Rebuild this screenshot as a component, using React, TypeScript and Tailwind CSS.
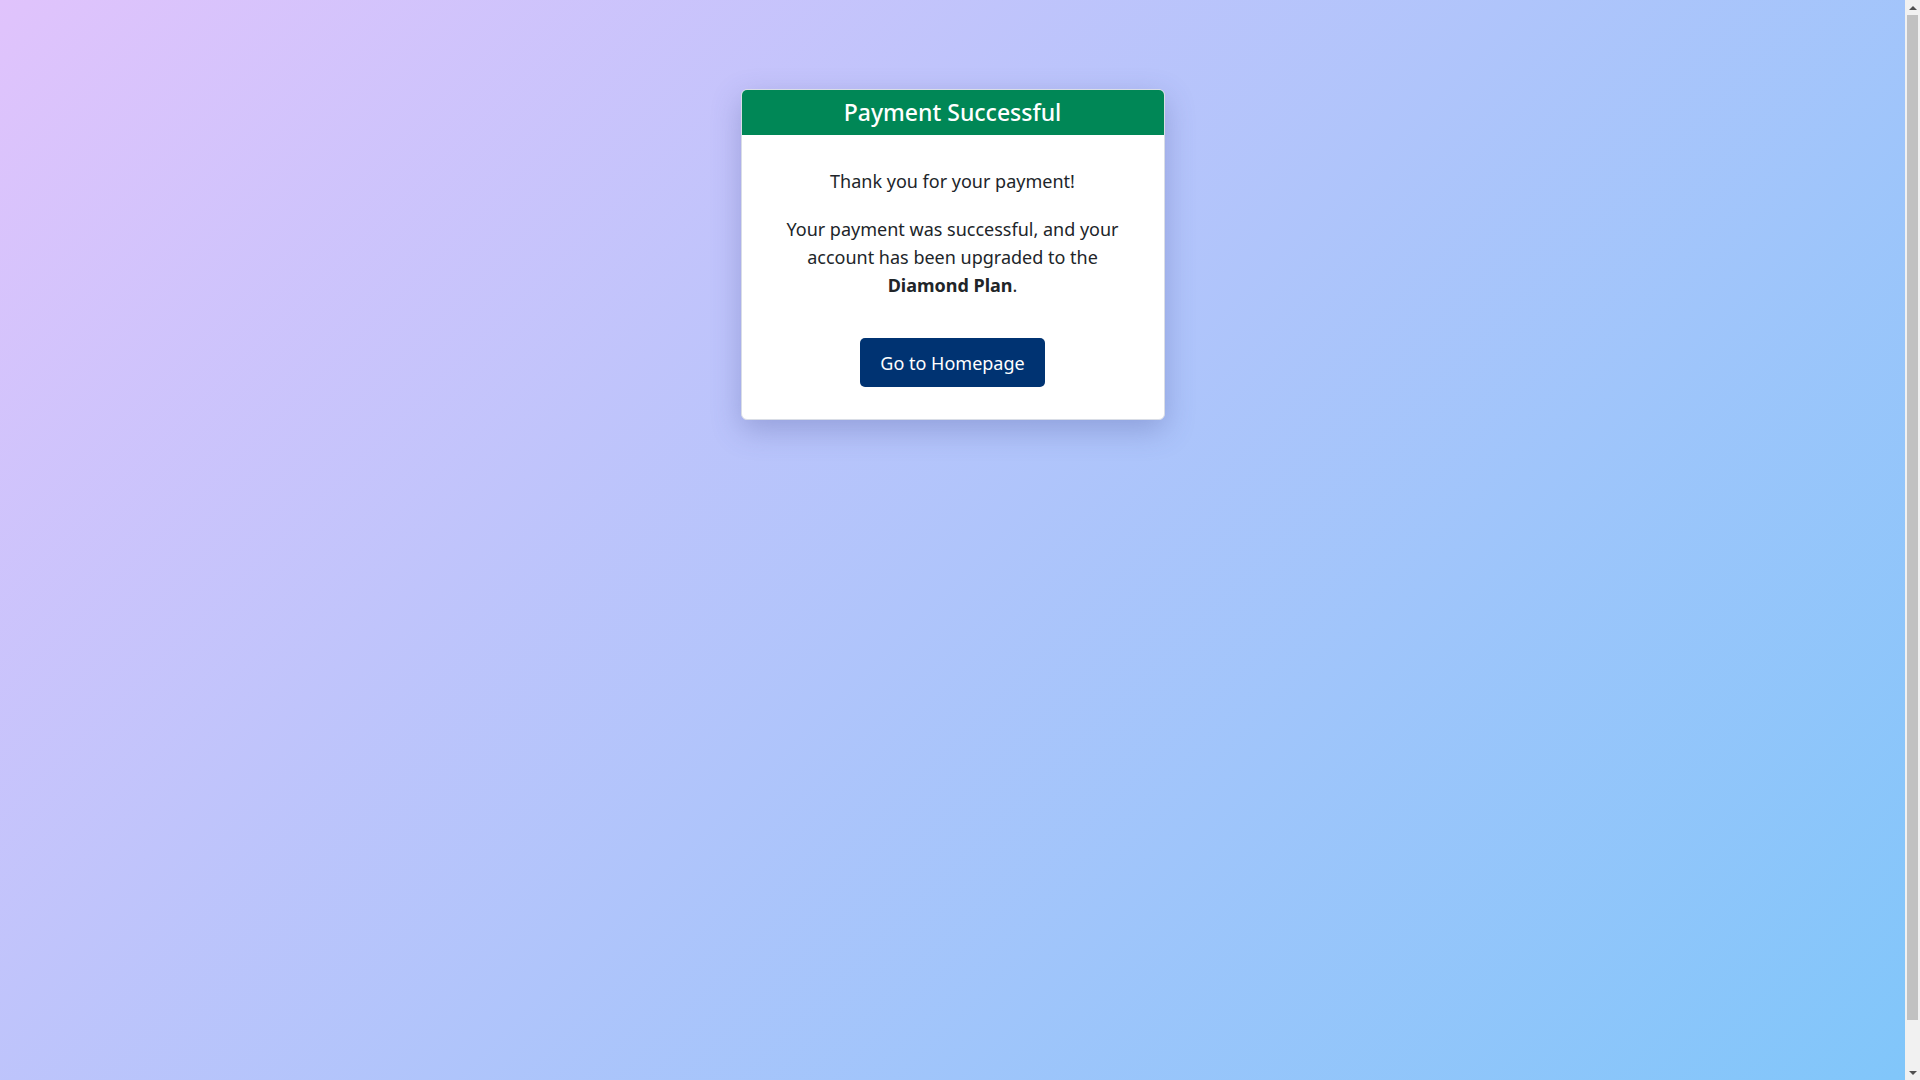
export default function App() {
    return (
        <div className="flex h-screen overflow-hidden">
            <main
                className="h-[calc(100vh+48px)] flex-1 bg-[linear-gradient(135deg,#e0c3fc_0%,#7fc6fa_100%)] pt-[89px] text-[#212529]"
                style={{ fontFamily: '"Noto Sans", "Open Sans", sans-serif' }}
            >
                {/* Success card */}
                <div className="mx-auto w-[424px] overflow-hidden rounded-md border border-[#d9dde6] bg-white shadow-[0_10px_30px_rgba(70,80,150,0.32)]">
                    <div className="flex h-[45px] items-center justify-center bg-[#008756] text-[23px] font-medium text-white">
                        Payment Successful
                    </div>
                    <div className="px-10 pt-8 pb-8 text-center text-[18px] leading-[28px]">
                        <p>Thank you for your payment!</p>
                        <p className="mt-5">
                            Your payment was successful, and your account has been upgraded to the{" "}
                            <strong className="font-bold">Diamond Plan</strong>.
                        </p>
                        <button className="mt-[39px] h-[49px] rounded-[5px] bg-[#003372] px-5 text-[18px] text-white">
                            Go to Homepage
                        </button>
                    </div>
                </div>
            </main>

            {/* page scrollbar */}
            <div className="flex w-[15px] flex-col items-center bg-[#f1f1f1]">
                <div className="flex h-[15px] w-full items-center justify-center">
                    <div className="h-0 w-0 border-x-[4px] border-b-[4px] border-x-transparent border-b-[#505050]" />
                </div>
                <div className="w-[11px] flex-1 pb-[45px]">
                    <div className="h-full w-full bg-[#c1c1c1]" />
                </div>
                <div className="flex h-[15px] w-full items-center justify-center">
                    <div className="h-0 w-0 border-x-[4px] border-t-[4px] border-x-transparent border-t-[#505050]" />
                </div>
            </div>
        </div>
    )
}
